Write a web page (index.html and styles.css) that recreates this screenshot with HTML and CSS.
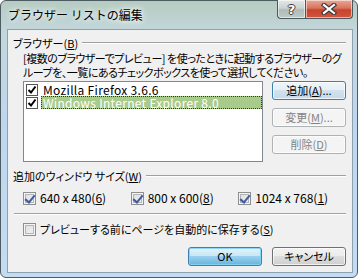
FILE: index.html
```html
<!DOCTYPE html>
<html lang="ja">
<head>
  <meta charset="UTF-8">
  <title>ブラウザー リストの編集</title>
  <link rel="stylesheet" href="styles.css">
</head>
<body>

  <div class="window">
    <div class="titlebar">
      <span class="title">ブラウザー リストの編集</span>
      <div class="caption">
        <div class="cap-btn cap-help">?</div>
        <div class="cap-btn cap-close">
          <svg width="16" height="12" viewBox="0 0 16 12">
            <path d="M3 2 L13 10 M13 2 L3 10" stroke="#3b3b3b" stroke-width="4.5" stroke-linecap="square"/>
            <path d="M3 2 L13 10 M13 2 L3 10" stroke="#ffffff" stroke-width="2.2" stroke-linecap="square"/>
          </svg>
        </div>
      </div>
    </div>

    <div class="client">
      <div class="group-head">
        <span>ブラウザー(<u>B</u>)</span>
        <div class="rule"></div>
      </div>

      <p class="desc">[複数のブラウザーでプレビュー] を使ったときに起動するブラウザーのグ<br>ループを、一覧にあるチェックボックスを使って選択してください。</p>

      <div class="browser-row">
        <div class="listbox">
          <div class="item">
            <span class="lcheck"><svg width="10" height="10" viewBox="0 0 10 10"><path d="M1.5 5 L4 7.5 L8.5 1.5" fill="none" stroke="#000" stroke-width="2"/></svg></span>
            <span class="item-text">Mozilla Firefox 3.6.6</span>
          </div>
          <div class="item">
            <span class="lcheck"><svg width="10" height="10" viewBox="0 0 10 10"><path d="M1.5 5 L4 7.5 L8.5 1.5" fill="none" stroke="#000" stroke-width="2"/></svg></span>
            <span class="item-text selected">Windows Internet Explorer 8.0</span>
          </div>
        </div>

        <div class="side-buttons">
          <button class="btn btn-focus">追加(<u>A</u>)...</button>
          <button class="btn" disabled>変更(<u>M</u>)...</button>
          <button class="btn" disabled>削除(<u>D</u>)</button>
        </div>
      </div>

      <div class="group-head group-sizes">
        <span>追加のウィンドウ サイズ(<u>W</u>)</span>
        <div class="rule"></div>
      </div>

      <div class="sizes">
        <label class="check"><span class="box on"></span>640 x 480(<u>6</u>)</label>
        <label class="check"><span class="box on"></span>800 x 600(<u>8</u>)</label>
        <label class="check"><span class="box on"></span>1024 x 768(<u>1</u>)</label>
      </div>

      <div class="separator"></div>

      <label class="check save"><span class="box"></span>プレビューする前にページを自動的に保存する(<u>S</u>)</label>

      <div class="footer">
        <button class="btn btn-default">OK</button>
        <button class="btn">キャンセル</button>
      </div>
    </div>
  </div>

</body>
</html>
```

FILE: styles.css
```css
/* Basic Reset */
* { margin: 0; padding: 0; box-sizing: border-box; }
body {
  width: 360px;
  height: 278px;
  overflow: hidden;
  background: #ffffff;
  font-family: "Noto Sans CJK JP", sans-serif;
  font-size: 11px;
  font-feature-settings: "palt";
  color: #000;
}
u { text-decoration: underline; text-underline-offset: 1px; }

/* window frame */
.window {
  width: 358px;
  height: 278px;
  border: 1px solid #4d5b63;
  border-radius: 6px;
  background: linear-gradient(to bottom, #b6cbc0 0, #c3d7dc 30px, #bfd7ee 120px, #c4dcf2 100%);
  padding: 0 4px 4px 6px;
  display: flex;
  flex-direction: column;
}
.titlebar {
  height: 28px;
  display: flex;
  justify-content: space-between;
  align-items: flex-start;
}
.title {
  font-size: 12px;
  font-feature-settings: normal;
  line-height: 15px;
  margin-top: 6px;
  margin-left: 1px;
  text-shadow: 0 0 5px #fff, 0 0 8px #fff;
}
.caption {
  display: flex;
  margin-top: -1px;
}
.cap-btn {
  height: 19px;
  border: 1px solid #4a5860;
  border-top: none;
  display: flex;
  align-items: center;
  justify-content: center;
  box-shadow: inset 0 0 0 1px rgba(255,255,255,0.55);
}
.cap-help {
  width: 28px;
  border-radius: 0 0 0 4px;
  border-right: none;
  background: linear-gradient(to bottom, #e3e9e7 0, #c9d3d1 45%, #aebcb9 55%, #bfcac8 100%);
  color: #fff;
  font-family: "DejaVu Sans", sans-serif;
  font-weight: bold;
  font-size: 13px;
  text-shadow: 1px 0 0 #3d3d3d, -1px 0 0 #3d3d3d, 0 1px 0 #3d3d3d, 0 -1px 0 #3d3d3d;
}
.cap-close {
  width: 48px;
  border-radius: 0 0 4px 0;
  background: linear-gradient(to bottom, #e9a895 0, #d9735e 45%, #c7442c 55%, #d2553b 100%);
}

/* client area */
.client {
  flex: 1;
  background: #f0f0f0;
  border: 1px solid #8ea1b2;
  padding: 6px 6px 0 5px;
  display: flex;
  flex-direction: column;
}
.group-head {
  display: flex;
  align-items: center;
  height: 14px;
  line-height: 14px;
}
.group-head .rule {
  flex: 1;
  height: 2px;
  border-top: 1px solid #a0a0a0;
  border-bottom: 1px solid #fff;
  margin-left: 4px;
  margin-top: -1px;
}
.desc {
  margin: 1px 0 0 10px;
  line-height: 14px;
  white-space: nowrap;
  letter-spacing: -0.5px;
}

.browser-row {
  display: flex;
  margin: 2px 0 0 10px;
}
.listbox {
  width: 240px;
  height: 81px;
  background: #fff;
  border: 1px solid #828790;
  padding: 1px 0 0 2px;
}
.item {
  display: flex;
  align-items: center;
  height: 13px;
}
.lcheck {
  width: 12px;
  height: 12px;
  border: 1px solid #555;
  background: #fff;
  display: flex;
  align-items: center;
  justify-content: center;
  margin-right: 3px;
}
.item-text {
  flex: 1;
  font-size: 12px;
  line-height: 13px;
  padding-left: 2px;
  letter-spacing: 0.3px;
}
.item-text.selected {
  background: #a8ca8b;
  color: #fff;
  outline: 1px dotted #333;
  outline-offset: -1px;
}

.side-buttons {
  display: flex;
  flex-direction: column;
  gap: 8px;
  margin-left: 9px;
}

/* buttons */
.btn {
  width: 74px;
  height: 19px;
  font-family: inherit;
  font-size: 11px;
  font-feature-settings: "palt";
  line-height: 15px;
  color: #000;
  border: 1px solid #707070;
  border-radius: 3px;
  background: linear-gradient(to bottom, #f2f2f2 0, #ebebeb 50%, #dddddd 50%, #cfcfcf 100%);
  box-shadow: inset 0 0 0 1px rgba(255,255,255,0.7);
}
.btn:disabled {
  color: #838383;
  border-color: #adb2b5;
  background: #f4f4f4;
}
.btn-focus {
  border-color: #3c7fb1;
  background: linear-gradient(to bottom, #f0f6fa 0, #e3eef6 50%, #d2e2ee 50%, #c6d9e8 100%);
}
.btn-default {
  border-color: #3c7fb1;
  background: linear-gradient(to bottom, #e5f4fc 0, #c4e5f6 50%, #98d1ef 50%, #68b3db 100%);
  box-shadow: inset 0 0 0 1px rgba(130,210,245,0.9);
}

/* check boxes */
.group-sizes { margin-top: 7px; }
.sizes {
  display: flex;
  margin: 8px 0 0 10px;
}
.check {
  display: flex;
  align-items: center;
  height: 14px;
  line-height: 14px;
  width: 111px;
  font-size: 12px;
}
.box {
  width: 13px;
  height: 13px;
  border: 1px solid #8e8f8f;
  background: linear-gradient(135deg, #dcdcdc 0, #f4f4f4 100%);
  box-shadow: inset 0 0 0 1px #f4f4f4, inset 0 0 0 2px #b6b6b6;
  margin-right: 4px;
  position: relative;
  flex: none;
}
.box.on::after {
  content: "";
  position: absolute;
  left: 3px;
  top: 0px;
  width: 4px;
  height: 8px;
  border: solid #3e5aa2;
  border-width: 0 2px 2px 0;
  transform: rotate(40deg);
}
.separator {
  height: 2px;
  border-top: 1px solid #a0a0a0;
  border-bottom: 1px solid #fff;
  margin: 8px 0 0 1px;
}
.save {
  width: auto;
  font-size: 11px;
  margin: 7px 0 0 10px;
}
.footer {
  display: flex;
  justify-content: flex-end;
  gap: 10px;
  margin-top: 11px;
}
```
